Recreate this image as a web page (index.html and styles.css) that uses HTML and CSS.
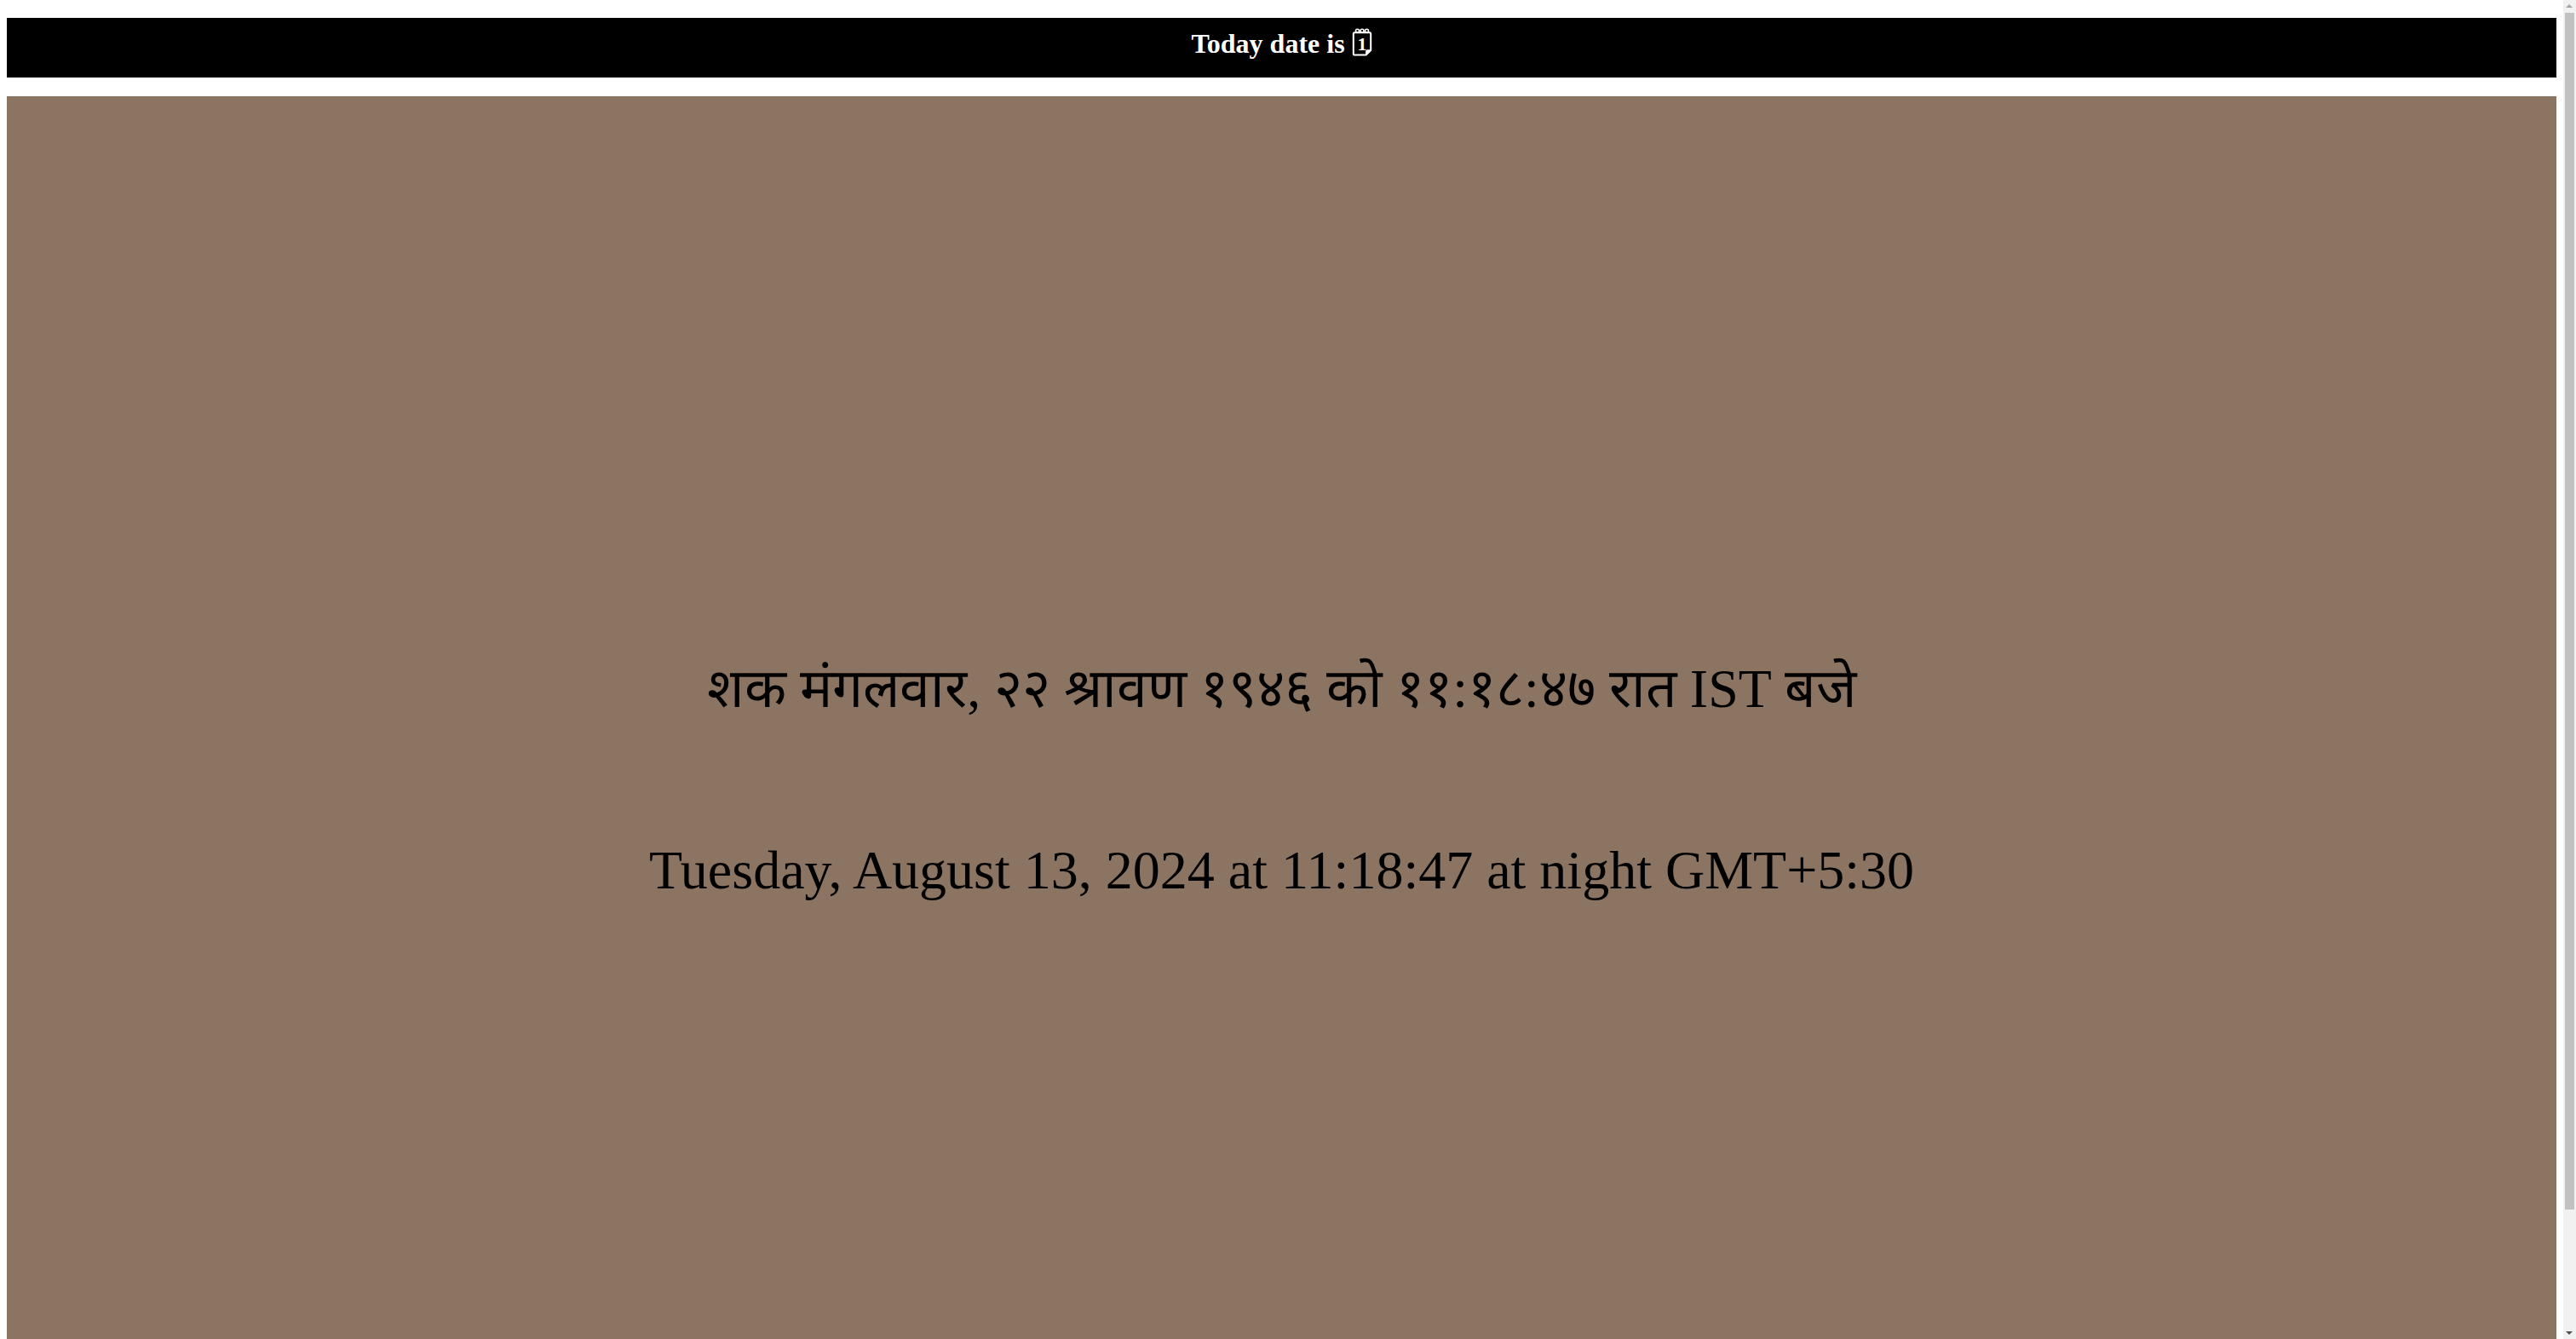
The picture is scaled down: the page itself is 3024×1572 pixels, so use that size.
FILE: index.html
```html
<!DOCTYPE html>
<html lang="en">
<head>
<meta charset="utf-8">
<title>Today date</title>
<link rel="stylesheet" href="styles.css">
</head>
<body>
<h1 class="topbar">Today date is <svg class="cal-icon" viewBox="0 0 24 33" width="24" height="33" aria-hidden="true"><g fill="none" stroke="#fff" stroke-width="1.6"><circle cx="6.5" cy="3.2" r="2"/><circle cx="12" cy="3.2" r="2"/><circle cx="17.5" cy="3.2" r="2"/></g><path d="M3.2 5.2 H20.8 a1.4 1.4 0 0 1 1.4 1.4 V26 L16.6 31.6 H3.2 a1.4 1.4 0 0 1 -1.4 -1.4 V6.6 a1.4 1.4 0 0 1 1.4 -1.4 Z" fill="none" stroke="#fff" stroke-width="2"/><path d="M22.2 26 H18.2 a1.4 1.4 0 0 0 -1.4 1.4 V31.6" fill="#fff" stroke="#fff" stroke-width="1.4"/><text x="12" y="25.5" text-anchor="middle" class="cal-num">1</text></svg></h1>
<section class="clock">
  <p class="clock-line clock-hi" lang="hi">शक मंगलवार, २२ श्रावण १९४६ को ११:१८:४७ रात IST बजे</p>
  <p class="clock-line clock-en">Tuesday, August 13, 2024 at 11:18:47 at night GMT+5:30</p>
</section>
<div class="fake-scrollbar" aria-hidden="true">
  <div class="sb-arrow sb-up"></div>
  <div class="sb-thumb"></div>
  <div class="sb-arrow sb-down"></div>
</div>
</body>
</html>
```
FILE: styles.css
```css
html {
  background: #fff;
}
body {
  margin: 0;
  padding: 21px 23px 8px 8px;
  font-family: "Liberation Serif", "Times New Roman", serif;
  color: #000;
}
.topbar {
  margin: 0 0 22px;
  padding: 12px 16px 21px;
  background: #000;
  color: #fff;
  font-size: 32px;
  line-height: 37px;
  font-weight: bold;
  text-align: center;
}
.cal-icon {
  display: inline-block;
  vertical-align: -4px;
}
.cal-num {
  fill: #fff;
  font-family: "Liberation Serif", serif;
  font-weight: bold;
  font-size: 22px;
}
.clock {
  height: 100vh;
  padding: 16px;
  background: #8c7463;
  display: flex;
  flex-direction: column;
  justify-content: center;
  align-items: center;
  gap: 133px;
}
.clock-line {
  margin: 0;
  font-size: 64px;
  line-height: 80px;
  text-align: center;
}
.fake-scrollbar {
  position: fixed;
  top: 0;
  right: 0;
  width: 15px;
  height: 100vh;
  background: #f1f1f1;
}
.sb-thumb {
  position: absolute;
  top: 15px;
  left: 2px;
  width: 11px;
  height: 1405px;
  background: #c1c1c1;
}
.sb-arrow {
  position: absolute;
  left: 3px;
  width: 0;
  height: 0;
  border-left: 4.5px solid transparent;
  border-right: 4.5px solid transparent;
}
.sb-up {
  top: 5px;
  border-bottom: 4.5px solid #a3a3a3;
}
.sb-down {
  bottom: 5px;
  border-top: 4.5px solid #505050;
}
```
